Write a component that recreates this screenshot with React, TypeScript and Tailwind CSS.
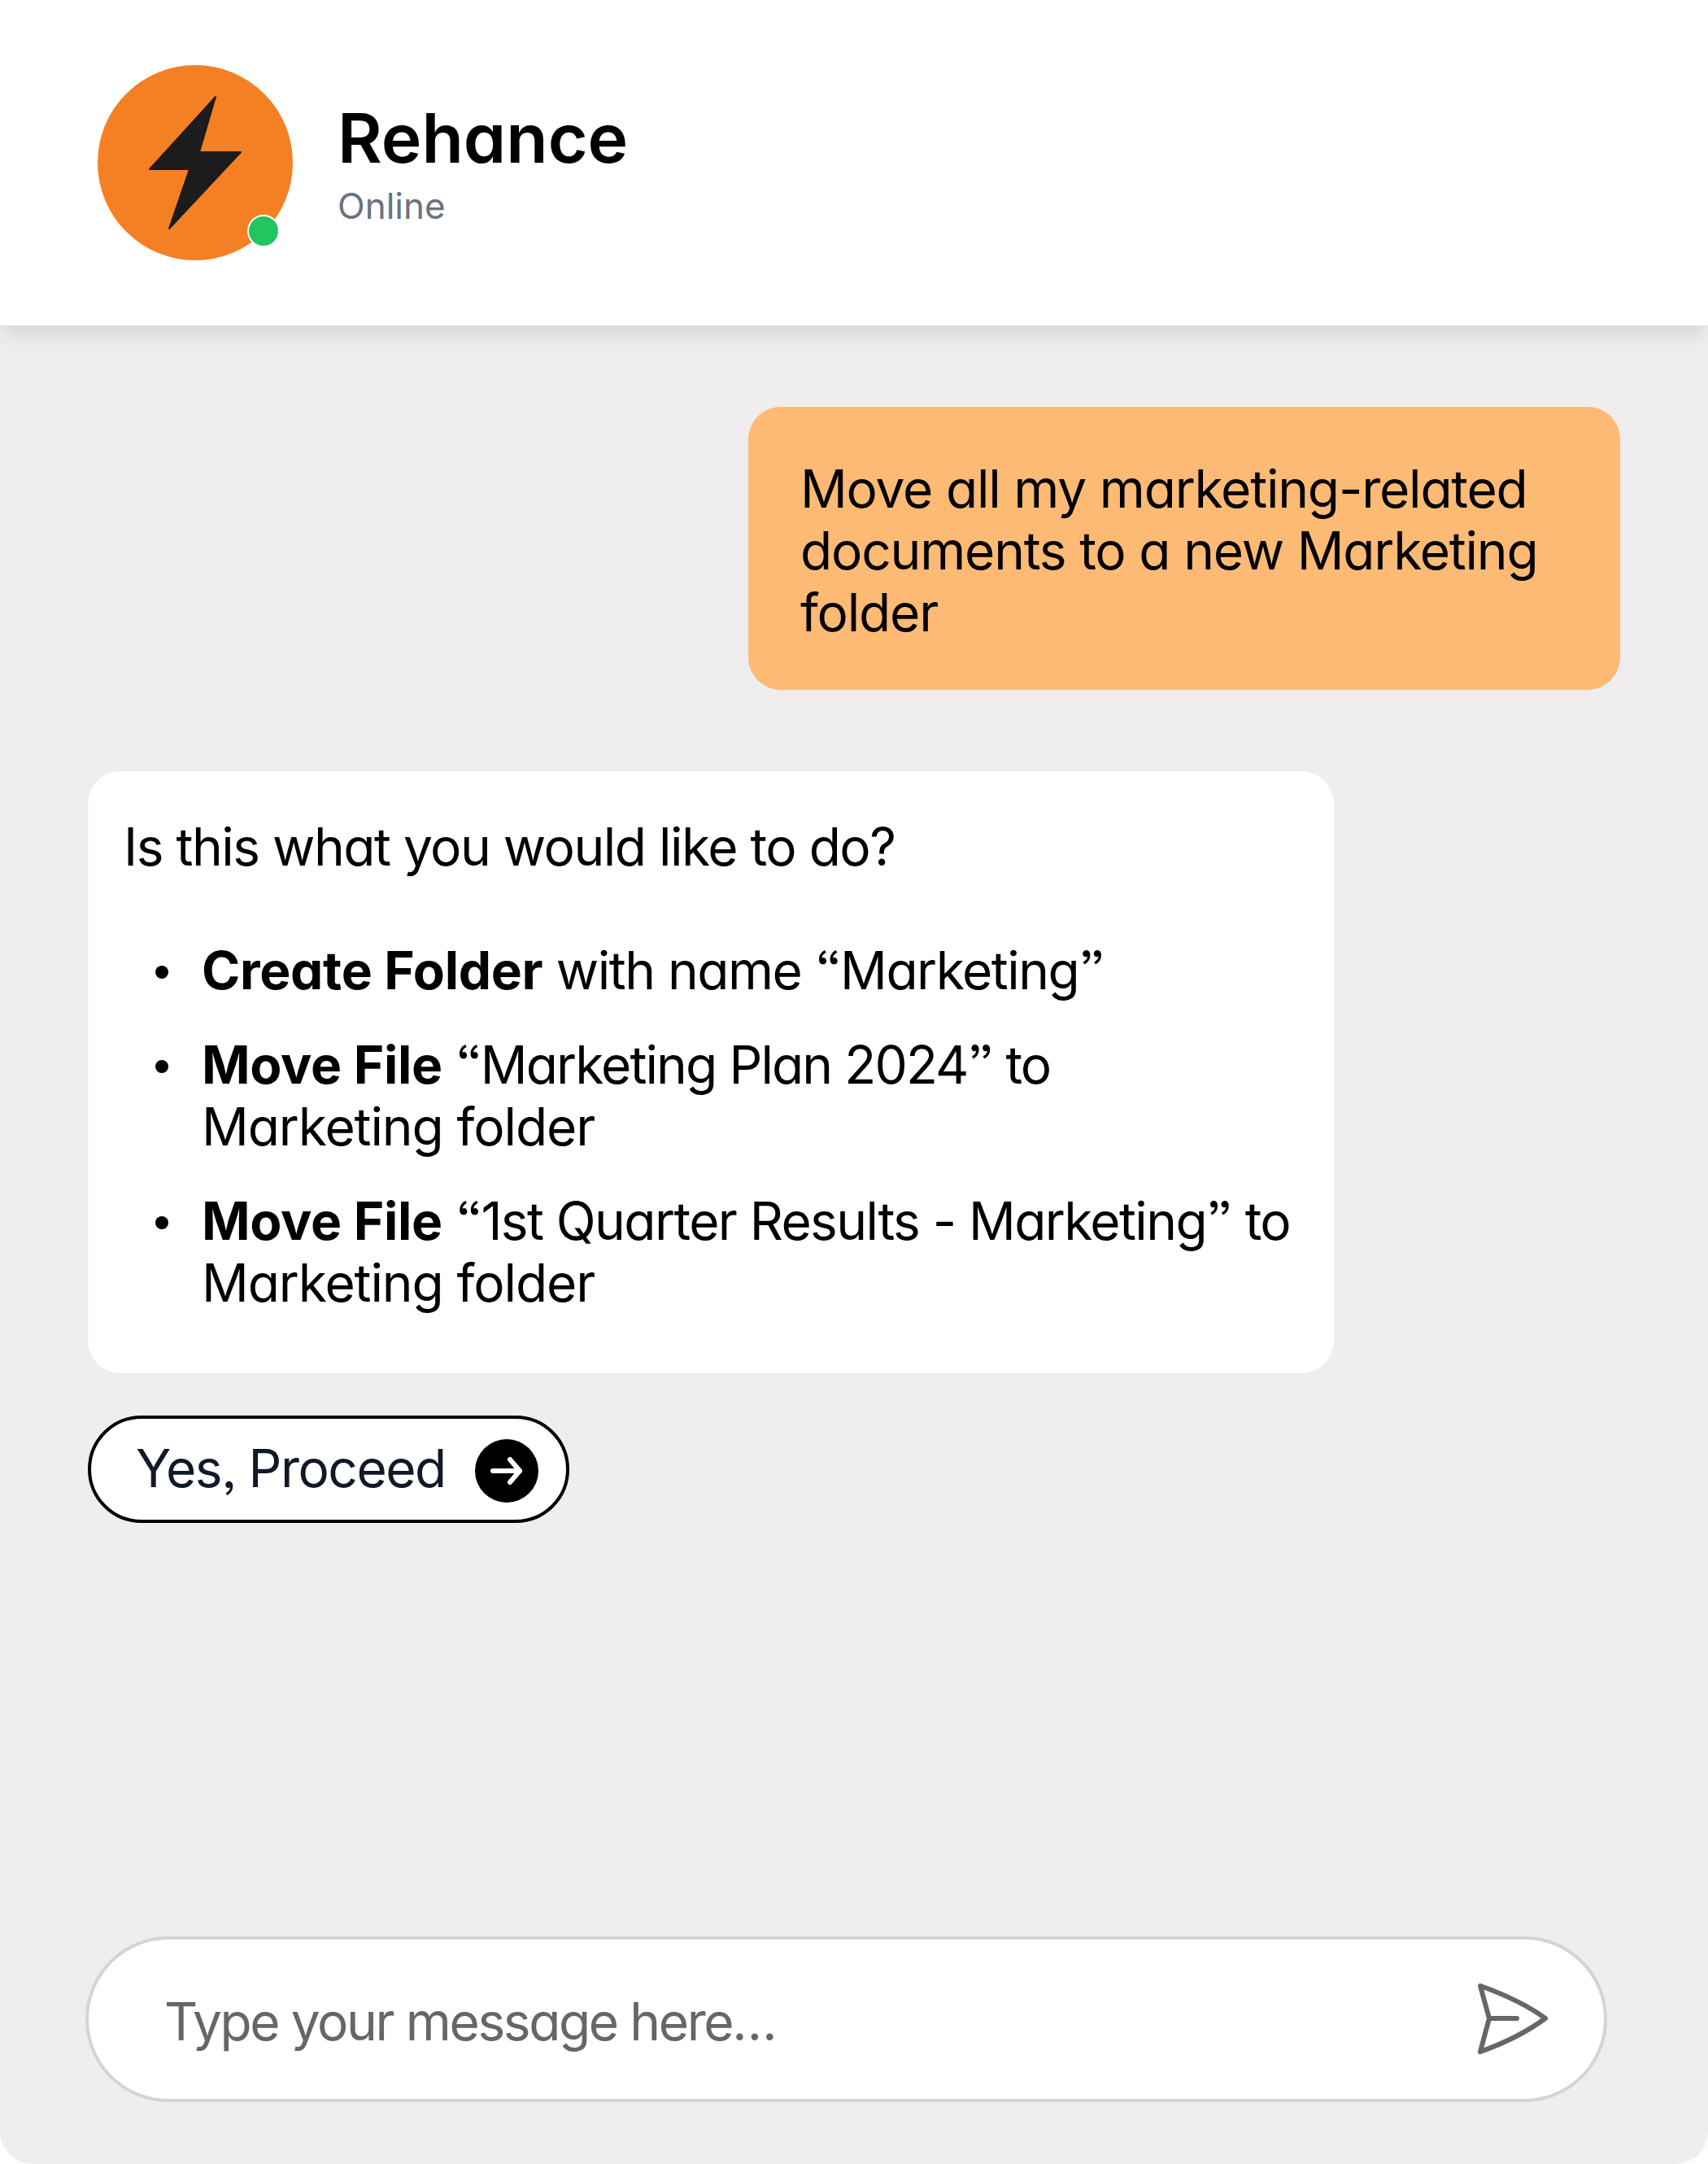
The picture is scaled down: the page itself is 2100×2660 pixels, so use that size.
const ITEMS = [
  { verb: 'Create Folder', rest: ' with name “Marketing”', restClass: 'tracking-[-1.5px]', next: '' },
  { verb: 'Move File', rest: ' “Marketing Plan 2024” to', restClass: 'tracking-[-1.9px]', next: 'Marketing folder' },
  { verb: 'Move File', rest: ' “1st Quarter Results - Marketing” to', restClass: 'tracking-[-1.6px]', next: 'Marketing folder' },
];

function BoltLogo() {
  return (
    <svg viewBox="0 0 240 240" className="h-full w-full">
      <path
        d="M145 39 L64 128 L113 128 L88 201 L176 107 L125 107 Z"
        fill="#1c1c1c"
        stroke="#1c1c1c"
        strokeWidth="2"
        strokeLinejoin="round"
      />
    </svg>
  );
}

function SendIcon() {
  return (
    <svg viewBox="0 0 90 90" fill="none" stroke="#666666" strokeWidth="6" strokeLinecap="round" strokeLinejoin="round" className="h-[90px] w-[90px]">
      <path d="M85 44 C66 30 44 18 5 4 L16 44 L5 85 C44 71 66 58 85 44 Z" />
      <path d="M16 44 H50" />
    </svg>
  );
}

function ArrowGlyph() {
  return (
    <svg viewBox="0 0 40 34" fill="none" stroke="#ffffff" strokeWidth="6" strokeLinecap="round" strokeLinejoin="round" className="h-[34px] w-[40px]">
      <path d="M3 17 H36" />
      <path d="M24 3 L36 17 L24 31" />
    </svg>
  );
}

export default function App() {
  return (
    <div className="h-[2660px] w-[2100px] bg-white font-['Inter',sans-serif] [font-feature-settings:'cv11','ss03']">
      <div className="flex h-full flex-col rounded-b-[40px] bg-[#efedee]">
        <header className="flex h-[400px] items-center gap-[55px] bg-white pl-[120px] shadow-[0_16px_24px_-4px_rgba(0,0,0,0.1)]">
          <div className="relative h-[240px] w-[240px] rounded-full bg-[#f58023]">
            <BoltLogo />
            <span className="absolute left-[184px] top-[184px] h-[40px] w-[40px] rounded-full border-2 border-white bg-[#22c55e]" />
          </div>
          <div>
            <h1 className="text-[84px] font-semibold leading-[100px] text-black">Rehance</h1>
            <p className="mt-[5px] text-[44px] leading-[56px] text-[#6b7280]">Online</p>
          </div>
        </header>

        <main className="flex flex-1 flex-col pl-[108px] pr-[108px] pt-[100px]">
          <div className="w-[1072px] self-end rounded-[40px] bg-[#fdba74] px-[64px] pb-[57px] pt-[63px] text-[64px] leading-[76px] tracking-[-1.2px] text-black">
            Move all my marketing-related documents to a new Marketing folder
          </div>

          <div className="mt-[100px] w-[1532px] rounded-[40px] bg-white pb-[73px] pl-[44px] pr-[40px] pt-[55px] text-[64px] leading-[76px] tracking-[-1.5px] text-black">
            <p>Is this what you would like to do?</p>
            <ul className="mt-[76px] flex flex-col gap-[40px]">
              {ITEMS.map((item, i) => (
                <li key={i} className="flex">
                  <span className="ml-[39px] mr-[41px] mt-[32px] h-[16px] w-[16px] shrink-0 rounded-full bg-black" />
                  <div>
                    <p>
                      <strong className="font-bold tracking-[-0.3px]">{item.verb}</strong>
                      <span className={item.restClass}>{item.rest}</span>
                    </p>
                    {item.next && <p className="tracking-[-1.1px]">{item.next}</p>}
                  </div>
                </li>
              ))}
            </ul>
          </div>

          <button className="mt-[52px] flex h-[132px] w-[592px] items-center gap-[36px] rounded-full border-4 border-black bg-white pl-[55px] text-[64px] tracking-[-1.5px] text-[#111827]">
            <span className="mb-[3px]">Yes, Proceed</span>
            <span className="mt-[4px] flex h-[78px] w-[78px] items-center justify-center rounded-full bg-black">
              <ArrowGlyph />
            </span>
          </button>

          <div className="mb-[76px] -ml-[3px] mt-auto flex h-[204px] w-[1871px] items-center justify-between rounded-full border-4 border-[#d1d5db] bg-white pl-[93px] pr-[67px]">
            <span className="mt-[6px] text-[64px] tracking-[-2.4px] text-[#666666]">Type your message here…</span>
            <SendIcon />
          </div>
        </main>
      </div>
    </div>
  );
}
